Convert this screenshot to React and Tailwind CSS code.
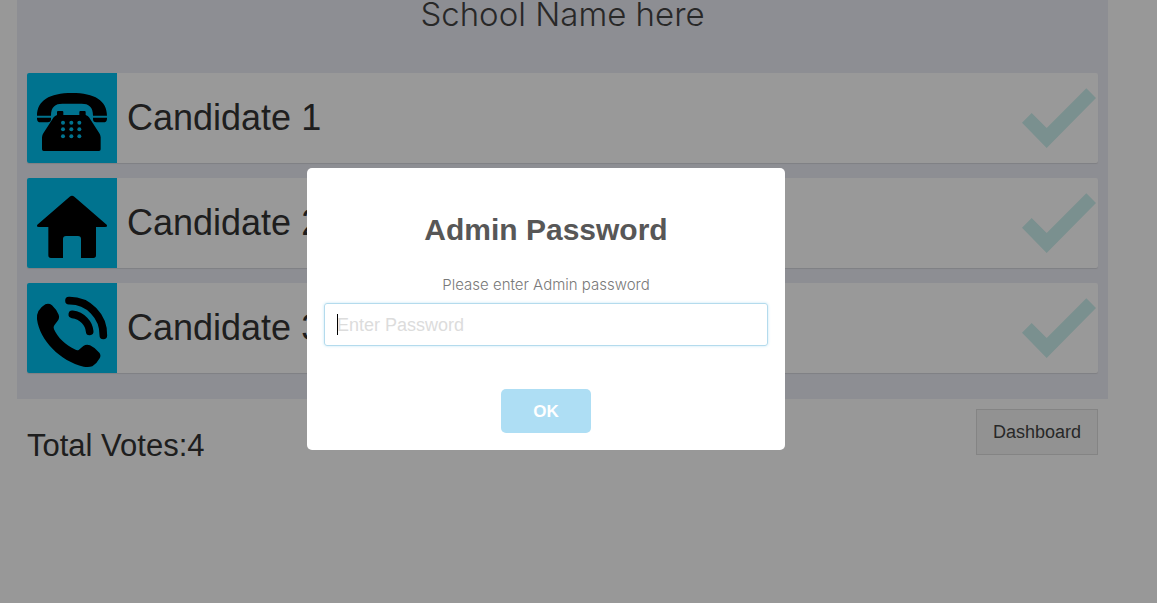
import React from "react";

function DeskPhoneIcon() {
  return (
    <svg viewBox="81 69 270 270" className="size-full" aria-hidden="true">
      <path d="M111 197C111 152 148 129 216 129S321 152 321 197H279C279 170 266 161 245 161H187C166 161 153 170 153 197Z" />
      <path d="M111 203H153V208Q153 217 143 217H122Q111 217 111 206ZM279 203H321V206Q321 217 310 217H289Q279 217 279 208Z" />
      <path d="M171 186Q171 183 174 183H187Q190 183 190 186V195H238V186Q238 183 241 183H254Q257 183 257 186V195Q264 197 267 202L298 250Q302 256 302 262V298Q302 303 297 303H131Q126 303 126 298V262Q126 256 130 250L161 202Q165 197 171 195Z" />
      {[218, 238, 259].map((y) =>
        [189, 214, 238].map((x) => (
          <circle key={`${x}-${y}`} cx={x} cy={y} r="6" className="fill-[#00c0ef]" />
        ))
      )}
    </svg>
  );
}

function HouseIcon() {
  return (
    <svg viewBox="81 24 270 270" className="size-full" aria-hidden="true">
      <path d="M209 80Q216 75 223 80L320 164Q324 171 315 171H288V256Q288 264 280 264H243V207Q243 198 234 198H198Q189 198 189 207V264H153Q145 264 145 256V171H117Q108 171 112 164Z" />
    </svg>
  );
}

function RingingPhoneIcon() {
  return (
    <svg viewBox="81 24 270 270" className="size-full" aria-hidden="true">
      <path d="M136 88Q147 84 156 91Q169 103 176 119Q180 129 172 139L163 151Q159 156 162 163C173 188 197 211 224 223Q231 227 236 225L250 213Q259 207 270 211Q287 219 298 233Q304 241 299 250Q291 265 277 274Q266 278 251 275C181 259 119 196 111 133Q108 105 136 88Z" />
      <path
        d="M207 77C265 76 311 124 310 181M217 118C247 122 267 145 269 169"
        fill="none"
        stroke="black"
        strokeWidth="23"
        strokeLinecap="round"
      />
    </svg>
  );
}

const candidates = [
  { name: "Candidate 1", Icon: DeskPhoneIcon },
  { name: "Candidate 2", Icon: HouseIcon },
  { name: "Candidate 3", Icon: RingingPhoneIcon },
];

function CandidateRow({ name, Icon }) {
  return (
    <li className="flex h-[90px] items-center overflow-hidden rounded-xs bg-white shadow-[0_1px_1px_rgba(0,0,0,0.1)]">
      <div className="size-[90px] shrink-0 bg-[#00c0ef]">
        <Icon />
      </div>
      <span className="flex-1 pl-[10px] text-[36px] leading-10 text-[#333]">{name}</span>
      <button type="button" aria-label={`Vote for ${name}`} className="mr-[2px]">
        <svg viewBox="0 0 222 180" className="h-[60px] w-[74px] fill-[#ccf0ee]" aria-hidden="true">
          <path d="M0 104L29 75L74 120L193 1L222 30L74 180Z" />
        </svg>
      </button>
    </li>
  );
}

function PasswordDialog() {
  return (
    <div className="fixed inset-0 flex items-center justify-center bg-black/40 pt-[15px] pr-[65px]">
      <form
        role="dialog"
        aria-labelledby="dialog-title"
        onSubmit={(e) => e.preventDefault()}
        className="flex w-full max-w-[478px] flex-col items-center rounded-[5px] bg-white p-[17px]"
      >
        <h2 id="dialog-title" className="mt-[25px] text-[30px] leading-10 font-bold text-[#575757]">
          Admin Password
        </h2>
        <label htmlFor="admin-password" className="mt-[23px] font-['Inter'] text-[15px] leading-6 font-light text-[#797979]">
          Please enter Admin password
        </label>
        <div className="relative mt-[6px] w-full">
          <input
            id="admin-password"
            type="password"
            autoFocus
            placeholder="Enter Password"
            className="block h-[43px] w-full rounded-[3px] border border-[#b4dbed] px-3 pt-px text-[18px] text-[#333] caret-transparent shadow-[0_0_3px_#c4e6f5] outline-none placeholder:text-[#dcdcdc]"
          />
          <span className="absolute top-[11px] left-[13px] h-[21px] w-px bg-black" aria-hidden="true" />
        </div>
        <button
          type="submit"
          className="mt-[43px] h-11 rounded-[5px] bg-[#aedef4] px-8 pt-px text-[17px] font-semibold text-white"
        >
          OK
        </button>
      </form>
    </div>
  );
}

export default function App() {
  return (
    <div className="min-h-screen bg-[#fdfdfd] font-['Liberation_Sans',Arial,sans-serif]">
      <div className="pr-[49px] pl-[17px]">
        <main className="bg-[#ecedf5] px-[10px] pb-[26px]">
          <h1 className="pb-[45px] text-center font-['Inter'] text-[33px] leading-7 font-light text-[#444]">
            School Name here
          </h1>
          <ul className="flex flex-col gap-[15px]">
            {candidates.map((c) => (
              <CandidateRow key={c.name} {...c} />
            ))}
          </ul>
        </main>
        <footer className="flex items-start justify-between px-[10px] pt-[10px]">
          <p className="pt-5 text-[31px] leading-[34px] text-[#333]">Total Votes:4</p>
          <button
            type="button"
            className="h-[46px] border border-[#ddd] bg-[#f4f4f4] px-4 text-[18px] text-[#444]"
          >
            Dashboard
          </button>
        </footer>
      </div>
      <PasswordDialog />
    </div>
  );
}
